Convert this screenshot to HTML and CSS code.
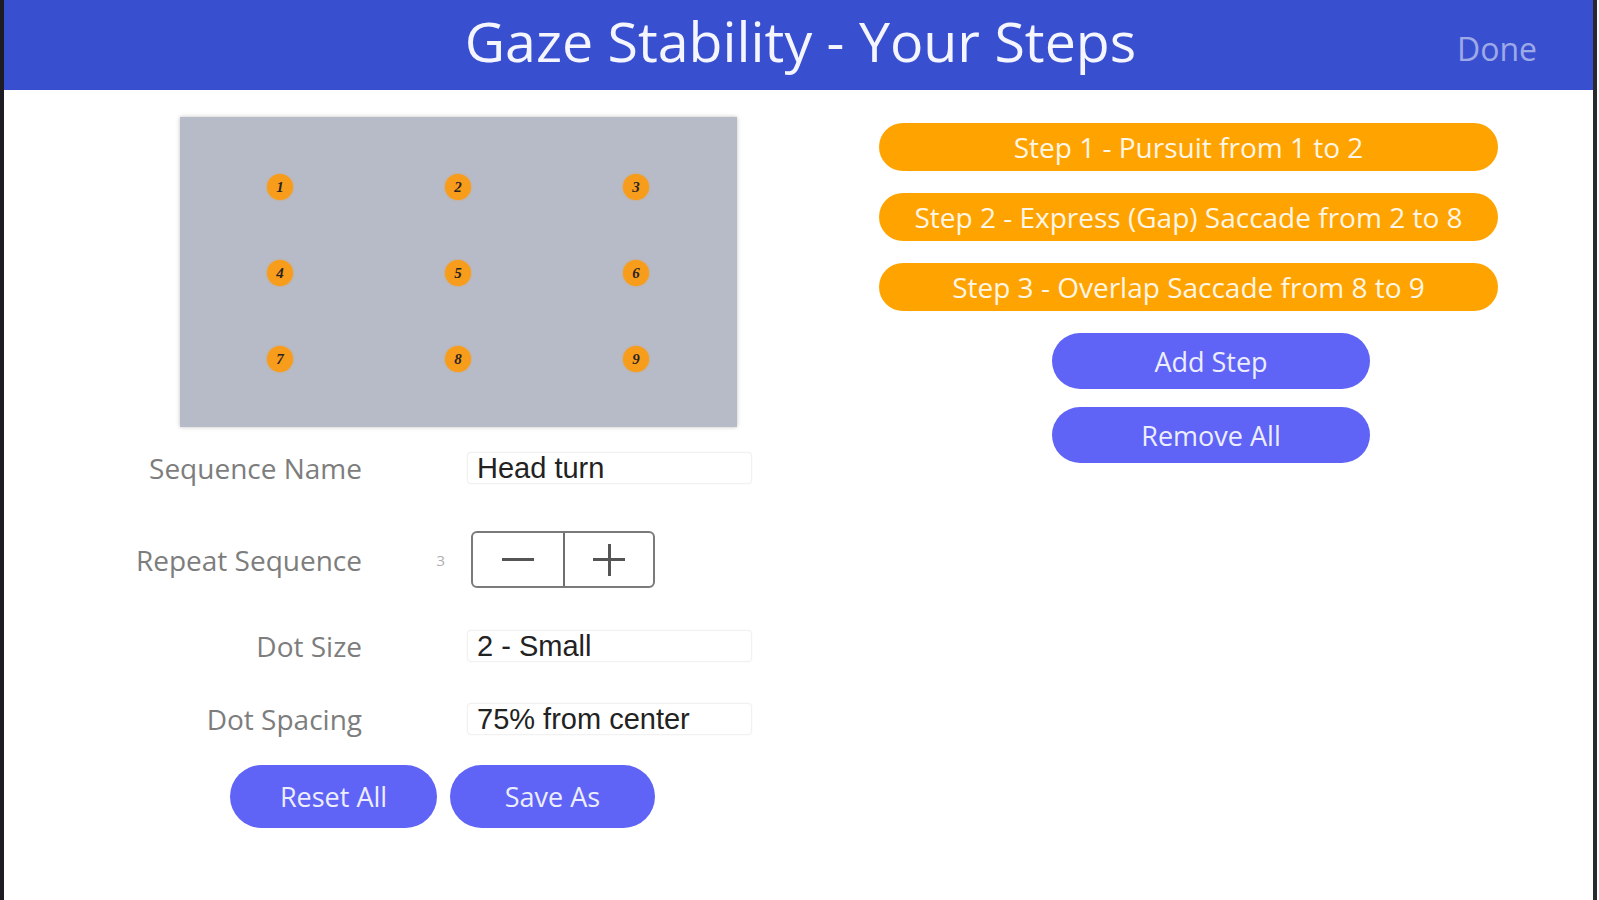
FILE: index.html
```html
<!DOCTYPE html>
<html lang="en">
<head>
<meta charset="utf-8">
<title>Gaze Stability - Your Steps</title>
<link rel="stylesheet" href="styles.css">
</head>
<body>
<div class="frame">
  <header class="topbar">
    <h1 class="title">Gaze Stability - Your Steps</h1>
    <span class="done">Done</span>
  </header>
  <main class="main">
    <section class="left">
      <div class="canvas">
        <div class="dots">
          <span class="dot">1</span><span class="dot">2</span><span class="dot">3</span>
          <span class="dot">4</span><span class="dot">5</span><span class="dot">6</span>
          <span class="dot">7</span><span class="dot">8</span><span class="dot">9</span>
        </div>
      </div>
      <div class="form">
        <div class="row row-name">
          <label class="label">Sequence Name</label>
          <span class="mid"></span>
          <div class="field">Head turn</div>
        </div>
        <div class="row row-repeat">
          <label class="label">Repeat Sequence</label>
          <span class="mid count">3</span>
          <div class="stepper">
            <span class="step-btn"><span class="minus"></span></span>
            <span class="step-btn"><span class="plus"></span></span>
          </div>
        </div>
        <div class="row row-size">
          <label class="label">Dot Size</label>
          <span class="mid"></span>
          <div class="field">2 - Small</div>
        </div>
        <div class="row row-spacing">
          <label class="label">Dot Spacing</label>
          <span class="mid"></span>
          <div class="field">75% from center</div>
        </div>
      </div>
      <div class="actions">
        <button class="btn btn-reset">Reset All</button>
        <button class="btn btn-save">Save As</button>
      </div>
    </section>
    <section class="right">
      <div class="pill">Step 1 - Pursuit from 1 to 2</div>
      <div class="pill">Step 2 - Express (Gap) Saccade from 2 to 8</div>
      <div class="pill">Step 3 - Overlap Saccade from 8 to 9</div>
      <button class="btn btn-wide btn-add">Add Step</button>
      <button class="btn btn-wide btn-remove">Remove All</button>
    </section>
  </main>
</div>
</body>
</html>
```

FILE: styles.css
```css
* { box-sizing: border-box; }
html, body { margin: 0; padding: 0; background: #ffffff; }
body {
  width: 1599px;
  height: 900px;
  overflow: hidden;
  font-family: "Open Sans", "Noto Sans", sans-serif;
}
.frame {
  width: 1597px;
  height: 900px;
  border-left: 4px solid #1c1c22;
  border-right: 4px solid #2a2a2e;
  background: #ffffff;
}
.topbar {
  height: 90px;
  background: #3850cf;
  display: flex;
  align-items: center;
  justify-content: center;
  position: relative;
}
.title {
  margin: 0;
  padding-bottom: 8px;
  padding-left: 4px;
  font-size: 55.5px;
  font-weight: 400;
  color: #f4f5ff;
  letter-spacing: 0;
  line-height: 1;
}
.done {
  position: absolute;
  right: 56px;
  top: 33px;
  font-size: 32px;
  line-height: 1;
  color: #9ea9e8;
}
.main {
  display: flex;
  padding-left: 116px;
}
.left {
  width: 635px;
  padding-top: 27px;
  display: flex;
  flex-direction: column;
}
.canvas {
  margin-left: 60px;
  width: 557px;
  height: 310px;
  background: #b7bbc7;
  box-shadow: 0 0 4px rgba(0, 0, 0, 0.25);
  padding: 57px 0 0 87px;
}
.dots {
  display: grid;
  grid-template-columns: repeat(3, 26px);
  grid-auto-rows: 26px;
  column-gap: 152px;
  row-gap: 60px;
}
.dot {
  width: 26px;
  height: 26px;
  border-radius: 50%;
  background: #f89c1c;
  box-shadow: 0 0 2px rgba(248, 156, 28, 0.8);
  color: #2a2420;
  font-family: "Liberation Serif", serif;
  font-style: italic;
  font-weight: 700;
  font-size: 15px;
  display: flex;
  align-items: center;
  justify-content: center;
}
.form {
  display: flex;
  flex-direction: column;
}
.row {
  display: grid;
  grid-template-columns: 242px 105px 285px;
  align-items: center;
}
.row-name { margin-top: 25px; }
.row-repeat { margin-top: 47px; }
.row-size { margin-top: 42px; }
.row-spacing { margin-top: 41px; }
.label {
  text-align: right;
  font-size: 28px;
  color: #7d7d7d;
  line-height: 1;
  white-space: nowrap;
}
.mid {
  display: block;
}
.count {
  text-align: right;
  padding-right: 22px;
  font-size: 15px;
  color: #b0b0b0;
}
.field {
  height: 32px;
  background: #ffffff;
  border: 1px solid #f1f1f1;
  border-radius: 4px;
  box-shadow: 0 0 2px rgba(0, 0, 0, 0.06);
  padding-left: 9px;
  font-family: "Liberation Sans", Arial, sans-serif;
  font-size: 29px;
  line-height: 30px;
  color: #222222;
  white-space: nowrap;
}
.stepper {
  margin-left: 4px;
  width: 184px;
  height: 57px;
  border: 2px solid #7a7a7a;
  border-radius: 6px;
  display: grid;
  grid-template-columns: 1fr 1fr;
}
.step-btn {
  display: flex;
  align-items: center;
  justify-content: center;
  position: relative;
}
.step-btn + .step-btn {
  border-left: 2px solid #6e6e6e;
}
.minus, .plus {
  display: block;
  width: 32px;
  height: 3px;
  background: #555555;
  position: relative;
}
.plus::after {
  content: "";
  position: absolute;
  left: 14.5px;
  top: -14.5px;
  width: 3px;
  height: 32px;
  background: #555555;
}
.actions {
  display: flex;
  gap: 13px;
  margin-top: 30px;
  margin-left: 110px;
}
.btn {
  border: none;
  border-radius: 32px;
  background: #5f63f6;
  color: #eceeff;
  font-family: "Open Sans", "Noto Sans", sans-serif;
  font-size: 27px;
  padding: 0;
  cursor: pointer;
}
.btn-reset { width: 207px; height: 63px; }
.btn-save { width: 205px; height: 63px; }
.right {
  margin-left: 124px;
  padding-top: 33px;
  display: flex;
  flex-direction: column;
  align-items: flex-start;
}
.pill {
  width: 619px;
  height: 48px;
  border-radius: 24px;
  background: #ffa300;
  color: #fff6e6;
  font-size: 28px;
  line-height: 48px;
  text-align: center;
  white-space: nowrap;
  margin-bottom: 22px;
}
.btn-wide {
  width: 318px;
  height: 56px;
  border-radius: 28px;
  margin-left: 173px;
}
.btn-add { margin-top: 0; }
.btn-remove { margin-top: 18px; }
```
